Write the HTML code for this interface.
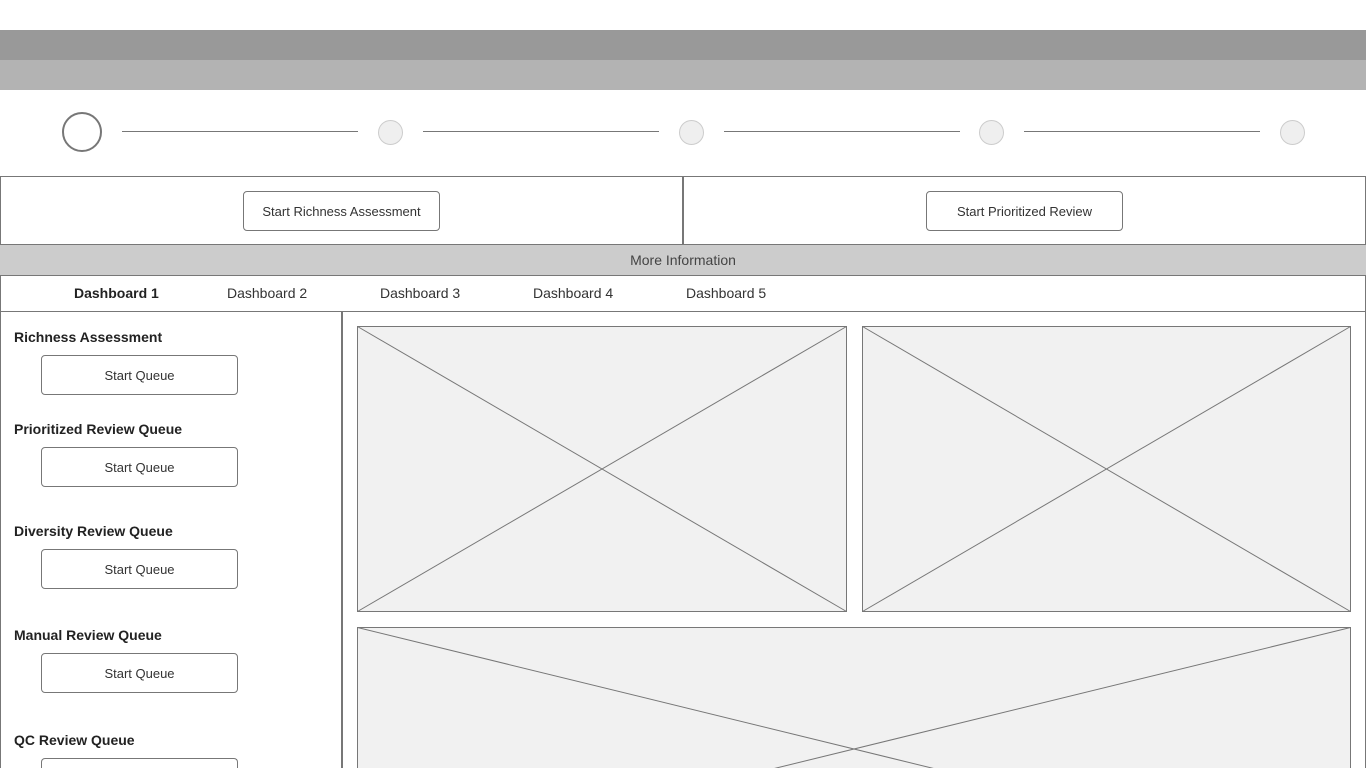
<!DOCTYPE html>
<html style="overflow:hidden"><head><meta charset="utf-8"><style>
*{margin:0;padding:0;box-sizing:border-box}
html,body{width:1366px;height:768px;overflow:hidden}
body{background:#fff;font-family:"Liberation Sans",Arial,sans-serif;color:#333;position:relative}
.a{position:absolute}
.btn{position:absolute;border:1px solid #777;border-radius:4px;background:#fff;font-size:13px;color:#333;display:flex;align-items:center;justify-content:center}
.lbl{position:absolute;left:14px;font-size:14px;font-weight:bold;color:#222}
.tab{position:absolute;top:285px;font-size:14px;color:#333}
.line{position:absolute;top:131px;height:1px;background:#777}
.dot{position:absolute;top:120px;width:25px;height:25px;border-radius:50%;background:#efefef;border:1px solid #ccc}
</style></head><body>
<div class="a" style="left:0;top:30px;width:1366px;height:30px;background:#999"></div>
<div class="a" style="left:0;top:60px;width:1366px;height:30px;background:#b3b3b3"></div>

<div class="a" style="left:62px;top:112px;width:40px;height:40px;border-radius:50%;border:2px solid #777"></div>
<div class="line" style="left:122px;width:236px"></div>
<div class="dot" style="left:378px"></div>
<div class="line" style="left:423px;width:236px"></div>
<div class="dot" style="left:679px"></div>
<div class="line" style="left:724px;width:236px"></div>
<div class="dot" style="left:979px"></div>
<div class="line" style="left:1024px;width:236px"></div>
<div class="dot" style="left:1280px"></div>

<div class="a" style="left:0;top:176px;width:1366px;height:69px;border:1px solid #777"></div>
<div class="a" style="left:682px;top:176px;width:2px;height:69px;background:#777"></div>
<div class="btn" style="left:243px;top:191px;width:197px;height:40px">Start Richness Assessment</div>
<div class="btn" style="left:926px;top:191px;width:197px;height:40px">Start Prioritized Review</div>

<div class="a" style="left:0;top:244px;width:1366px;height:32px;background:#ccc;border-top:1px solid #777;border-bottom:1px solid #777;font-size:14px;color:#444;text-align:center;line-height:30px">More Information</div>

<div class="a" style="left:0;top:275px;width:1366px;height:37px;border-left:1px solid #777;border-right:1px solid #777;border-bottom:1px solid #777"></div>
<div class="tab" style="left:74px;font-weight:bold;color:#222">Dashboard 1</div>
<div class="tab" style="left:227px">Dashboard 2</div>
<div class="tab" style="left:380px">Dashboard 3</div>
<div class="tab" style="left:533px">Dashboard 4</div>
<div class="tab" style="left:686px">Dashboard 5</div>

<div class="a" style="left:0;top:311px;width:1px;height:457px;background:#777"></div>
<div class="a" style="left:1365px;top:311px;width:1px;height:457px;background:#777"></div>
<div class="a" style="left:341px;top:311px;width:2px;height:457px;background:#777"></div>

<div class="lbl" style="top:329px">Richness Assessment</div>
<div class="btn" style="left:41px;top:355px;width:197px;height:40px">Start Queue</div>
<div class="lbl" style="top:421px">Prioritized Review Queue</div>
<div class="btn" style="left:41px;top:447px;width:197px;height:40px">Start Queue</div>
<div class="lbl" style="top:523px">Diversity Review Queue</div>
<div class="btn" style="left:41px;top:549px;width:197px;height:40px">Start Queue</div>
<div class="lbl" style="top:627px">Manual Review Queue</div>
<div class="btn" style="left:41px;top:653px;width:197px;height:40px">Start Queue</div>
<div class="lbl" style="top:732px">QC Review Queue</div>
<div class="btn" style="left:41px;top:758px;width:197px;height:10px;border-bottom:none;border-radius:4px 4px 0 0"></div>

<svg class="a" style="left:0;top:0" width="1366" height="768">
<g fill="#f1f1f1" stroke="#777" stroke-width="1">
<rect x="357.5" y="326.5" width="489" height="285"/>
<line x1="357.5" y1="326.5" x2="846.5" y2="611.5"/><line x1="846.5" y1="326.5" x2="357.5" y2="611.5"/>
<rect x="862.5" y="326.5" width="488" height="285"/>
<line x1="862.5" y1="326.5" x2="1350.5" y2="611.5"/><line x1="1350.5" y1="326.5" x2="862.5" y2="611.5"/>
<rect x="357.5" y="627.5" width="993" height="243"/>
<line x1="357.5" y1="627.5" x2="1350.5" y2="870.5"/><line x1="1350.5" y1="627.5" x2="357.5" y2="870.5"/>
</g>
</svg>
</body></html>
